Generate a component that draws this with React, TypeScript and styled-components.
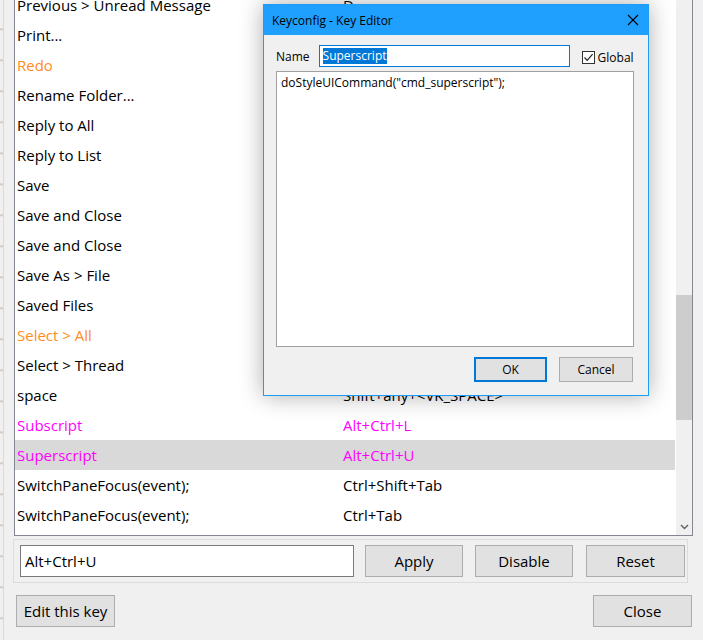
import React from "react";
import styled, { createGlobalStyle } from "styled-components";

const GlobalStyle = createGlobalStyle`
  html, body {
    margin: 0;
    padding: 0;
    background: #f0f0f0;
    font-family: "Open Sans", "Noto Sans", Arial, sans-serif;
    overflow: hidden;
  }
`;

type Tone = "normal" | "orange" | "pink";

const rows: { name: string; keys: string; tone: Tone; selected?: boolean }[] = [
  { name: "Previous > Unread Message", keys: "D", tone: "normal" },
  { name: "Print...", keys: "Ctrl+P", tone: "normal" },
  { name: "Redo", keys: "Ctrl+Y", tone: "orange" },
  { name: "Rename Folder...", keys: "F2", tone: "normal" },
  { name: "Reply to All", keys: "Ctrl+Shift+R", tone: "normal" },
  { name: "Reply to List", keys: "Ctrl+Shift+L", tone: "normal" },
  { name: "Save", keys: "Ctrl+S", tone: "normal" },
  { name: "Save and Close", keys: "Ctrl+Enter", tone: "normal" },
  { name: "Save and Close", keys: "Ctrl+Return", tone: "normal" },
  { name: "Save As > File", keys: "Ctrl+S", tone: "normal" },
  { name: "Saved Files", keys: "Ctrl+Shift+Y", tone: "normal" },
  { name: "Select > All", keys: "Ctrl+A", tone: "orange" },
  { name: "Select > Thread", keys: "Ctrl+Shift+A", tone: "normal" },
  { name: "space", keys: "Shift+any+<VK_SPACE>", tone: "normal" },
  { name: "Subscript", keys: "Alt+Ctrl+L", tone: "pink" },
  { name: "Superscript", keys: "Alt+Ctrl+U", tone: "pink", selected: true },
  { name: "SwitchPaneFocus(event);", keys: "Ctrl+Shift+Tab", tone: "normal" },
  { name: "SwitchPaneFocus(event);", keys: "Ctrl+Tab", tone: "normal" },
];

const toneColor: Record<Tone, string> = {
  normal: "#000000",
  orange: "#ff8c1e",
  pink: "#ff00ff",
};

export default function App() {
  return (
    <>
      <GlobalStyle />
      <Screen>
        <BackStrip />
        <Window>
          <ListBox>
            <RowsViewport>
              <RowsInner>
                {rows.map((r, i) => (
                  <Row key={i} $selected={r.selected}>
                    <Cell $tone={r.tone}>{r.name}</Cell>
                    <Cell $tone={r.tone}>{r.keys}</Cell>
                  </Row>
                ))}
              </RowsInner>
            </RowsViewport>
            <ScrollBar>
              <Thumb />
              <ScrollSpacer />
              <ArrowDown>
                <svg width="9" height="6" viewBox="0 0 9 6">
                  <path d="M1 1 L4.5 4.5 L8 1" fill="none" stroke="#606060" strokeWidth="1.4" />
                </svg>
              </ArrowDown>
            </ScrollBar>
          </ListBox>

          <EditGroup>
            <KeyInput>Alt+Ctrl+U</KeyInput>
            <Button $w={98} $ml={11}>Apply</Button>
            <Button $w={98} $ml={12}>Disable</Button>
            <Button $w={99} $ml={13}>Reset</Button>
          </EditGroup>

          <Footer>
            <Button $w={99}>Edit this key</Button>
            <Button $w={99}>Close</Button>
          </Footer>
        </Window>

        <Dialog>
          <TitleBar>
            <TitleText>Keyconfig - Key Editor</TitleText>
            <CloseGlyph>
              <svg width="12" height="12" viewBox="0 0 12 12">
                <path d="M1 1 L11 11 M11 1 L1 11" stroke="#000" strokeWidth="1.1" />
              </svg>
            </CloseGlyph>
          </TitleBar>
          <DialogBody>
            <NameRow>
              <Label>Name</Label>
              <NameInput>
                <Selected>Superscript</Selected>
              </NameInput>
              <CheckWrap>
                <CheckBox>
                  <svg width="11" height="11" viewBox="0 0 11 11">
                    <path d="M1.5 5.5 L4.2 8.3 L9.6 2.2" fill="none" stroke="#222" strokeWidth="1.2" />
                  </svg>
                </CheckBox>
                <Label>Global</Label>
              </CheckWrap>
            </NameRow>
            <CodeArea>doStyleUICommand("cmd_superscript");</CodeArea>
            <DialogButtons>
              <DlgButton $primary>OK</DlgButton>
              <DlgButton>Cancel</DlgButton>
            </DialogButtons>
          </DialogBody>
        </Dialog>
      </Screen>
    </>
  );
}

const Screen = styled.div`
  position: relative;
  width: 703px;
  height: 640px;
  display: flex;
  background: #f0f0f0;
`;

const BackStrip = styled.div`
  width: 3px;
  height: 640px;
  border-right: 1px solid #dadada;
  background: repeating-linear-gradient(
    180deg,
    #f0f0f0 0px,
    #f0f0f0 28px,
    #c9c2b4 29px,
    #f0f0f0 31px
  );
`;

const Window = styled.div`
  flex: 1;
  display: flex;
  flex-direction: column;
  padding-left: 10px;
`;

const ListBox = styled.div`
  display: flex;
  width: 677px;
  height: 535px;
  border: 1px solid #828790;
  border-top: none;
  background: #ffffff;
`;

const RowsViewport = styled.div`
  flex: 1;
  overflow: hidden;
  padding-right: 1px;
`;

const RowsInner = styled.div`
  margin-top: -10px;
`;

const Row = styled.div<{ $selected?: boolean }>`
  display: grid;
  grid-template-columns: 326px 1fr;
  height: 30px;
  align-items: center;
  padding-left: 2px;
  background: ${(p) => (p.$selected ? "#d9d9d9" : "transparent")};
`;

const Cell = styled.div<{ $tone: Tone }>`
  font-size: 15px;
  color: ${(p) => toneColor[p.$tone]};
  white-space: nowrap;
`;

const ScrollBar = styled.div`
  width: 16px;
  display: flex;
  flex-direction: column;
  background: #f0f0f0;
`;

const Thumb = styled.div`
  margin-top: 295px;
  height: 125px;
  background: #cdcdcd;
`;

const ScrollSpacer = styled.div`
  flex: 1;
`;

const ArrowDown = styled.div`
  height: 17px;
  display: flex;
  align-items: center;
  justify-content: center;
`;

const EditGroup = styled.div`
  display: flex;
  align-items: center;
  width: 667px;
  height: 42px;
  margin-top: 3px;
  margin-left: -1px;
  padding-left: 6px;
  border: 1px solid #dcdcdc;
`;

const KeyInput = styled.div`
  box-sizing: border-box;
  width: 334px;
  height: 32px;
  border: 1px solid #7a7a7a;
  background: #ffffff;
  display: flex;
  align-items: center;
  padding-left: 4px;
  font-size: 15px;
`;

const Button = styled.div<{ $w: number; $ml?: number }>`
  box-sizing: border-box;
  width: ${(p) => p.$w}px;
  height: 32px;
  margin-left: ${(p) => p.$ml ?? 0}px;
  border: 1px solid #adadad;
  background: #e1e1e1;
  display: flex;
  align-items: center;
  justify-content: center;
  font-size: 15px;
  color: #000;
`;

const Footer = styled.div`
  display: flex;
  justify-content: space-between;
  margin-top: 12px;
  padding-left: 2px;
  width: 676px;
`;

const Dialog = styled.div`
  position: absolute;
  left: 263px;
  top: 4px;
  width: 386px;
  height: 392px;
  box-sizing: border-box;
  border: 1px solid #1c9cf6;
  background: #f0f0f0;
  box-shadow: 0 0 22px rgba(0, 0, 0, 0.32);
  display: flex;
  flex-direction: column;
`;

const TitleBar = styled.div`
  height: 30px;
  background: #1fa0ff;
  display: flex;
  align-items: center;
  justify-content: space-between;
  padding: 0 9px 0 8px;
`;

const TitleText = styled.div`
  font-size: 12px;
  color: #000;
`;

const CloseGlyph = styled.div`
  display: flex;
  align-items: center;
`;

const DialogBody = styled.div`
  flex: 1;
  display: flex;
  flex-direction: column;
  padding: 10px 13px 0 12px;
`;

const NameRow = styled.div`
  display: flex;
  align-items: center;
  height: 22px;
`;

const Label = styled.div`
  font-size: 12px;
  color: #000;
`;

const NameInput = styled.div`
  box-sizing: border-box;
  width: 251px;
  height: 22px;
  margin-left: 9px;
  border: 1px solid #0078d7;
  background: #fff;
  display: flex;
  align-items: center;
  padding-left: 3px;
`;

const Selected = styled.span`
  font-size: 12px;
  background: #0078d7;
  color: #fff;
  line-height: 16px;
`;

const CheckWrap = styled.div`
  display: flex;
  align-items: center;
  margin-left: 12px;
  gap: 3px;
  margin-top: 3px;
`;

const CheckBox = styled.div`
  box-sizing: border-box;
  width: 13px;
  height: 13px;
  border: 1px solid #333;
  background: #fff;
  display: flex;
  align-items: center;
  justify-content: center;
`;

const CodeArea = styled.div`
  box-sizing: border-box;
  margin-top: 4px;
  width: 358px;
  height: 276px;
  border: 1px solid #a0a0a0;
  background: #fff;
  padding: 2px 4px;
  font-size: 12px;
  color: #000;
`;

const DialogButtons = styled.div`
  display: flex;
  justify-content: flex-end;
  gap: 12px;
  margin-top: 10px;
  padding-right: 2px;
`;

const DlgButton = styled.div<{ $primary?: boolean }>`
  box-sizing: border-box;
  width: ${(p) => (p.$primary ? 73 : 74)}px;
  height: 25px;
  border: ${(p) => (p.$primary ? "2px solid #0078d7" : "1px solid #adadad")};
  background: #e1e1e1;
  display: flex;
  align-items: center;
  justify-content: center;
  font-size: 12px;
  color: #000;
`;
